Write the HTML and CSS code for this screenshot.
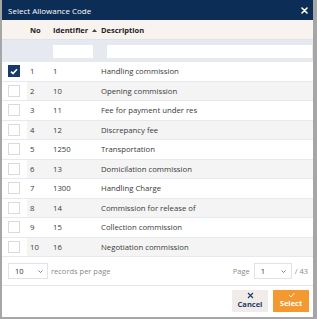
FILE: index.html
```html
<!DOCTYPE html>
<html>
<head>
<meta charset="utf-8">
<link rel="stylesheet" href="styles.css">
</head>
<body>
<div class="dialog">
  <div class="titlebar">
    <span class="title">Select Allowance Code</span>
    <svg class="close" width="7" height="7" viewBox="0 0 7 7"><path d="M1 1L6 6M6 1L1 6" stroke="#fff" stroke-width="1.6" stroke-linecap="round"/></svg>
  </div>
  <div class="row head">
    <span></span><span>No</span>
    <span class="sort">Identifier <svg width="5" height="3" viewBox="0 0 5 3"><path d="M0 3L2.5 0L5 3Z" fill="#444"/></svg></span>
    <span>Description</span>
  </div>
  <div class="row filter">
    <span></span><span></span>
    <span><input class="fid" type="text"></span>
    <span><input class="fdesc" type="text"></span>
  </div>
  <div class="tbody">
    <div class="row data"><span><i class="cb on"><svg width="8" height="7" viewBox="0 0 8 7"><path d="M1 3.6L3 5.6L7 1.2" stroke="#fff" stroke-width="1.6" fill="none"/></svg></i></span><span>1</span><span>1</span><span>Handling commission</span></div>
    <div class="row data"><span><i class="cb"></i></span><span>2</span><span>10</span><span>Opening commission</span></div>
    <div class="row data"><span><i class="cb"></i></span><span>3</span><span>11</span><span>Fee for payment under res</span></div>
    <div class="row data"><span><i class="cb"></i></span><span>4</span><span>12</span><span>Discrepancy fee</span></div>
    <div class="row data"><span><i class="cb"></i></span><span>5</span><span>1250</span><span>Transportation</span></div>
    <div class="row data"><span><i class="cb"></i></span><span>6</span><span>13</span><span>Domicilation commission</span></div>
    <div class="row data"><span><i class="cb"></i></span><span>7</span><span>1300</span><span>Handling Charge</span></div>
    <div class="row data"><span><i class="cb"></i></span><span>8</span><span>14</span><span>Commission for release of</span></div>
    <div class="row data"><span><i class="cb"></i></span><span>9</span><span>15</span><span>Collection commission</span></div>
    <div class="row data"><span><i class="cb"></i></span><span>10</span><span>16</span><span>Negotiation commission</span></div>
  </div>
  <div class="pager">
    <div class="pl">
      <div class="sel small"><span>10</span><svg width="5" height="3" viewBox="0 0 5 3"><path d="M0.5 0.5L2.5 2.5L4.5 0.5" stroke="#666" stroke-width="0.8" fill="none"/></svg></div>
      <span class="muted">records per page</span>
    </div>
    <div class="pr">
      <span class="muted">Page</span>
      <div class="sel page"><span>1</span><svg width="5" height="3" viewBox="0 0 5 3"><path d="M0.5 0.5L2.5 2.5L4.5 0.5" stroke="#666" stroke-width="0.8" fill="none"/></svg></div>
      <span class="muted">/ 43</span>
    </div>
  </div>
  <div class="actions">
    <button class="btn cancel"><svg width="7" height="7" viewBox="0 0 7 7"><path d="M1 1L6 6M6 1L1 6" stroke="#1d3b66" stroke-width="1.1"/></svg><span>Cancel</span></button>
    <button class="btn select"><svg width="7" height="6" viewBox="0 0 7 6"><path d="M1 3L3 5L6.5 1" stroke="#fff" stroke-width="0.8" fill="none"/></svg><span>Select</span></button>
  </div>
</div>
</body>
</html>
```
FILE: styles.css
```css
* { box-sizing: border-box; }
html, body { margin: 0; padding: 0; }
body {
  background: #a6a6a6;
  width: 317px;
  height: 319px;
  padding: 0 4px 2px 2px;
  font-family: "Open Sans", "DejaVu Sans", sans-serif;
  color: #333;
}
.dialog {
  width: 311px;
  height: 317px;
  background: #fff;
  display: flex;
  flex-direction: column;
  overflow: hidden;
}
.titlebar {
  height: 20px;
  flex: none;
  background: #0c2d56;
  color: #fff;
  display: flex;
  align-items: center;
  justify-content: space-between;
  padding: 0 5px 0 6px;
  font-size: 8px;
}
.row {
  display: grid;
  grid-template-columns: 25px 23px 48px 1fr;
  align-items: center;
  font-size: 7.75px;
}
.row > span { white-space: nowrap; overflow: hidden; }
.row > span:nth-child(n+2) { padding-left: 3px; }
.head {
  height: 20px;
  flex: none;
  background: #f8f3ee;
  border-bottom: 1px solid #dfe3ea;
  font-weight: 700;
  font-size: 7.5px;
  color: #222;
}
.sort svg { margin-left: 2px; vertical-align: 1px; }
.filter {
  height: 22px;
  flex: none;
  background: #e6e9ef;
}
.filter input {
  display: block;
  height: 13px;
  border: none;
  background: #fff;
  padding: 0;
  outline: none;
}
.fid { width: 40px; }
.fdesc { width: 205px; margin-left: 6px; }
.tbody { flex: none; }
.data {
  height: 19.5px;
  border-bottom: 1px solid #e6eaef;
  color: #3a3a3a;
}
.data:nth-child(even) { background: #f4f4f4; }
.data > span:first-child { background: #fff; height: 100%; display: flex; align-items: center; }
.cb {
  display: flex;
  align-items: center;
  justify-content: center;
  width: 12px;
  height: 12px;
  margin-left: 6px;
  border: 1px solid #dadada;
  background: #fff;
}
.cb.on { background: #163a69; border-color: #163a69; }
.pager {
  height: 29px;
  flex: none;
  border-bottom: 1px solid #e6e6e6;
  display: flex;
  justify-content: space-between;
  align-items: center;
  padding: 0 5px 0 6px;
  font-size: 7.5px;
}
.pl, .pr { display: flex; align-items: center; }
.muted { color: #8a8a8a; }
.sel {
  height: 16px;
  border: 1px solid #dfe3ea;
  display: flex;
  align-items: center;
  justify-content: space-between;
  background: #fff;
  color: #333;
}
.sel.small { width: 40px; padding: 0 4px 0 6px; margin-right: 3px; }
.sel.page { width: 38px; padding: 0 5px 0 6px; margin: 0 3px 0 4px; }
.actions {
  flex: 1;
  display: flex;
  justify-content: flex-end;
  align-items: flex-start;
  gap: 5px;
  padding: 4px 4px 0 0;
}
.btn {
  width: 36px;
  height: 22px;
  border: none;
  padding: 2px 0 0 0;
  display: flex;
  flex-direction: column;
  align-items: center;
  font-family: "Open Sans", "DejaVu Sans", sans-serif;
  font-size: 7.5px;
  font-weight: 700;
  line-height: 9px;
}
.btn svg { margin-bottom: 1px; }
.cancel { background: #f1ebea; color: #1d3b66; }
.select { background: #f3992f; color: #fff; }
```
